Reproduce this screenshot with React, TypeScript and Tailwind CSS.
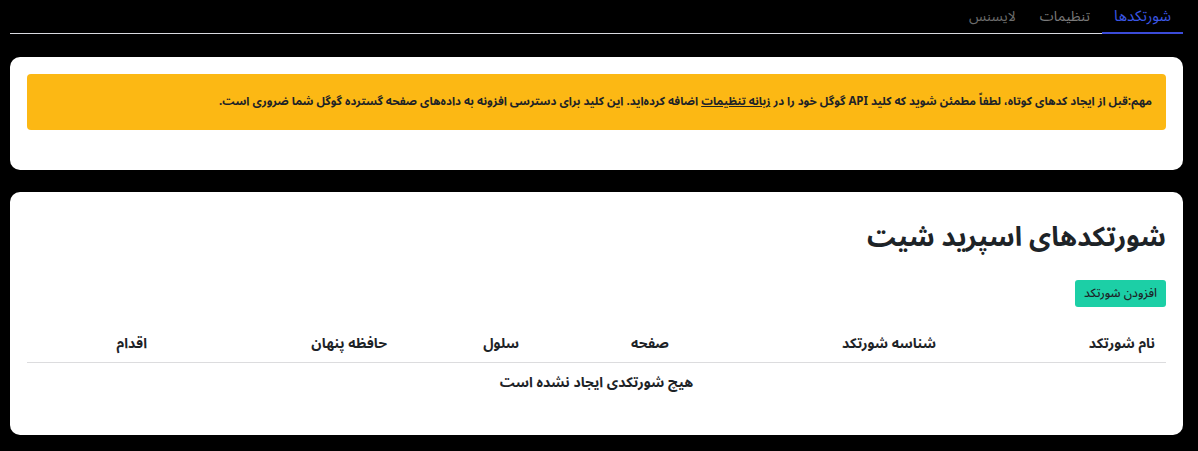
import React from 'react';

const font = { fontFamily: '"Noto Sans Arabic", "DejaVu Sans", sans-serif' };

const columns = [
  { label: 'نام شورتکد', w: 'w-[219px]' },
  { label: 'شناسه شورتکد', w: 'w-[267px]' },
  { label: 'صفحه', w: 'w-[150px]' },
  { label: 'سلول', w: 'w-[132px]' },
  { label: 'حافظه پنهان', w: 'w-[240px]' },
  { label: 'اقدام', w: '' },
];

export default function App() {
  return (
    <div dir="rtl" className="min-h-[451px] bg-black pl-[10px] pr-[15px]" style={font}>
      {/* tabs */}
      <div className="flex h-[34px] items-stretch border-b border-[#d9dae0]">
        <button className="-mb-px border-b-2 border-[#3b4bd8] px-3 text-[15px] text-[#3b57e6]">شورتکدها</button>
        <button className="px-3 text-[14px] text-[#7a7a7a]">تنظیمات</button>
        <button className="px-3 text-[14px] text-[#6c6c6c]">لایسنس</button>
      </div>

      {/* notice card */}
      <div className="mt-[23px] rounded-[10px] bg-white px-[17px] pb-[40px] pt-[17px]">
        <div className="flex h-[56px] items-center rounded-[4px] bg-[#fcb814] px-[14px] text-[11.5px] font-bold text-[#1d2327]">
          <p>
            مهم:قبل از ایجاد کدهای کوتاه، لطفاً مطمئن شوید که کلید API گوگل خود را در{' '}
            <span className="underline">زبانه تنظیمات</span> اضافه کرده‌اید. این کلید برای دسترسی افزونه به داده‌های صفحه گسترده گوگل شما ضروری است.
          </p>
        </div>
      </div>

      {/* shortcodes card */}
      <div className="mt-[22px] rounded-[10px] bg-white px-[17px] pb-[33px] pt-[24px]">
        <h1 className="text-[27px] font-bold leading-[44px] text-[#1d2327]">شورتکدهای اسپرید شیت</h1>
        <button className="mt-[20px] h-[27px] rounded-[3px] bg-[#1ccfa6] px-[9px] text-[12px] font-medium text-[#1d2327]">
          افزودن شورتکد
        </button>
        <table className="mt-[18px] w-full border-collapse text-right text-[14px] text-[#1d2327]">
          <thead>
            <tr className="border-b border-[#dcdcde]">
              {columns.map((c) => (
                <th key={c.label} className={`h-[37px] px-[11px] font-bold ${c.w}`}>
                  {c.label}
                </th>
              ))}
            </tr>
          </thead>
          <tbody>
            <tr>
              <td colSpan={6} className="h-[40px] text-center font-bold">
                هیچ شورتکدی ایجاد نشده است
              </td>
            </tr>
          </tbody>
        </table>
      </div>
    </div>
  );
}
